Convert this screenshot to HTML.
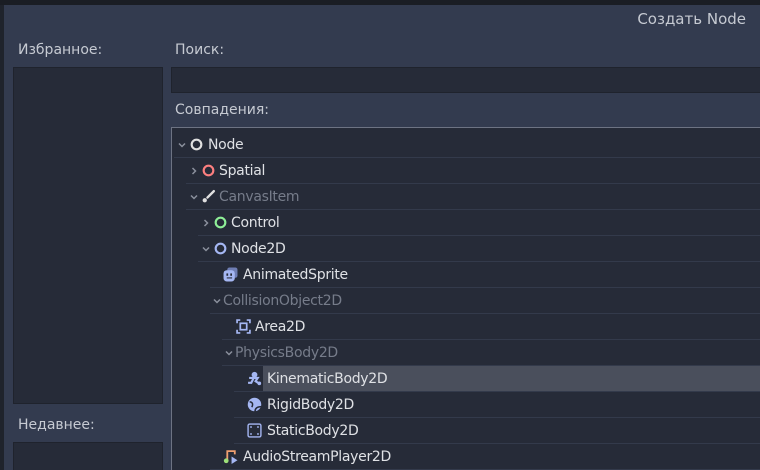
<!DOCTYPE html>
<html><head><meta charset="utf-8"><style>
*{margin:0;padding:0;box-sizing:border-box}
html,body{width:760px;height:470px;overflow:hidden}
body{background:#1f232c;font-family:"Liberation Sans","DejaVu Sans",sans-serif;position:relative}
.a{position:absolute}
.dlg{left:4px;top:5px;width:756px;height:465px;background:#333b4f}
.lbl{color:#c6cad2;font-size:14px;font-family:"DejaVu Sans",sans-serif}
.box{background:#262b38;border:1px solid #1f232d}
.tree{left:171px;top:127px;width:600px;height:343px;background:#262b38;border-left:1px solid #6d7383;border-top:1px solid #6d7383;overflow:hidden}
.row{position:absolute;height:26px;left:0;right:-20px;border-bottom:1px solid #333a4b}
.t{position:absolute;top:5px;font-size:14px;font-family:"DejaVu Sans",sans-serif;color:#dfe1e5;white-space:nowrap;letter-spacing:-0.3px}
.dim{color:#767c8a}
.ar{position:absolute;top:7px;width:12px;height:12px}
.ic{position:absolute;top:5px;width:15px;height:15px}
</style></head><body>
<div class="a" style="left:0;top:0;width:760px;height:5px;background:#1a1d24"></div>
<div class="a dlg"></div>
<div class="a lbl" style="right:14px;top:10px;font-size:15px">Создать Node</div>
<div class="a lbl" style="left:18px;top:42px">Избранное:</div>
<div class="a lbl" style="left:175px;top:42px">Поиск:</div>
<div class="a lbl" style="left:175px;top:102px">Совпадения:</div>
<div class="a lbl" style="left:18px;top:417px">Недавнее:</div>
<div class="a box" style="left:13px;top:67px;width:150px;height:337px"></div>
<div class="a box" style="left:13px;top:442px;width:150px;height:28px;border-bottom:none"></div>
<div class="a box" style="left:171px;top:67px;width:600px;height:26px"></div>
<div class="a tree">
<div class="row" style="top:4px;left:2px">
 <svg class="ar" style="left:2px" viewBox="0 0 12 12"><path d="M3 4.5l3 3 3-3" fill="none" stroke="#8a8f9c" stroke-width="1.5"/></svg>
 <svg class="ic" style="left:15px" viewBox="0 0 14 14"><circle cx="7" cy="7" r="4.5" fill="none" stroke="#e0e0e0" stroke-width="2"/></svg>
 <span class="t" style="left:34px">Node</span></div>
<div class="row" style="top:30px;left:14px">
 <svg class="ar" style="left:2px" viewBox="0 0 12 12"><path d="M4.5 3l3 3-3 3" fill="none" stroke="#8a8f9c" stroke-width="1.5"/></svg>
 <svg class="ic" style="left:15px" viewBox="0 0 14 14"><circle cx="7" cy="7" r="4.5" fill="none" stroke="#fc7f7f" stroke-width="2"/></svg>
 <span class="t" style="left:33px">Spatial</span></div>
<div class="row" style="top:56px;left:14px">
 <svg class="ar" style="left:2px" viewBox="0 0 12 12"><path d="M3 4.5l3 3 3-3" fill="none" stroke="#8a8f9c" stroke-width="1.5"/></svg>
 <svg class="ic" style="left:15px" viewBox="0 0 14 14"><path d="M12 2L6 8" stroke="#e0e0e0" stroke-width="2.2" stroke-linecap="round"/><circle cx="3.5" cy="10.5" r="2" fill="#e0e0e0"/></svg>
 <span class="t dim" style="left:33px">CanvasItem</span></div>
<div class="row" style="top:82px;left:26px">
 <svg class="ar" style="left:2px" viewBox="0 0 12 12"><path d="M4.5 3l3 3-3 3" fill="none" stroke="#8a8f9c" stroke-width="1.5"/></svg>
 <svg class="ic" style="left:15px" viewBox="0 0 14 14"><circle cx="7" cy="7" r="4.5" fill="none" stroke="#8eef97" stroke-width="2"/></svg>
 <span class="t" style="left:33px">Control</span></div>
<div class="row" style="top:108px;left:26px">
 <svg class="ar" style="left:2px" viewBox="0 0 12 12"><path d="M3 4.5l3 3 3-3" fill="none" stroke="#8a8f9c" stroke-width="1.5"/></svg>
 <svg class="ic" style="left:15px" viewBox="0 0 14 14"><circle cx="7" cy="7" r="4.5" fill="none" stroke="#a5b7f3" stroke-width="2"/></svg>
 <span class="t" style="left:33px">Node2D</span></div>
<div class="row" style="top:134px;left:38px">
 <svg class="ic" style="left:13px" viewBox="0 0 14 14"><rect x="4" y="0.5" width="9.5" height="9.5" rx="2" fill="#6f7eb4"/><rect x="0.5" y="3" width="10.5" height="10.5" rx="3" fill="#a5b7f3"/><rect x="3.2" y="6" width="1.6" height="2.2" fill="#262b38"/><rect x="6.8" y="6" width="1.6" height="2.2" fill="#262b38"/><path d="M3.5 10.2h5" stroke="#262b38" stroke-width="1"/></svg>
 <span class="t" style="left:33px">AnimatedSprite</span></div>
<div class="row" style="top:160px;left:38px">
 <svg class="ar" style="left:1px" viewBox="0 0 12 12"><path d="M3 4.5l3 3 3-3" fill="none" stroke="#8a8f9c" stroke-width="1.5"/></svg>
 <span class="t dim" style="left:13px">CollisionObject2D</span></div>
<div class="row" style="top:186px;left:50px">
 <svg class="ic" style="left:14px" viewBox="0 0 14 14"><path d="M1 4V1h3M10 1h3v3M13 10v3h-3M4 13H1v-3" fill="none" stroke="#a5b7f3" stroke-width="1.6"/><rect x="4" y="4" width="6" height="6" fill="none" stroke="#a5b7f3" stroke-width="1.6"/></svg>
 <span class="t" style="left:33px">Area2D</span></div>
<div class="row" style="top:212px;left:50px">
 <svg class="ar" style="left:1px" viewBox="0 0 12 12"><path d="M3 4.5l3 3 3-3" fill="none" stroke="#8a8f9c" stroke-width="1.5"/></svg>
 <span class="t dim" style="left:13px">PhysicsBody2D</span></div>
<div class="row" style="top:238px;left:62px">
 <div class="a" style="left:29px;top:0;right:0;height:25px;background:#4a4f5c"></div>
 <svg class="ic" style="left:13px" viewBox="0 0 14 14"><circle cx="7" cy="3.5" r="2.7" fill="#a5b7f3"/><path d="M2 6.5h8l-2 3 3 2M6 7l-2 4H1" fill="none" stroke="#a5b7f3" stroke-width="2"/><circle cx="11.5" cy="11.5" r="1.7" fill="#a5b7f3"/></svg>
 <span class="t" style="left:33px">KinematicBody2D</span></div>
<div class="row" style="top:264px;left:62px">
 <svg class="ic" style="left:13px" viewBox="0 0 14 14"><circle cx="7" cy="7" r="6.3" fill="#a5b7f3"/><path d="M2.5 4.5c2.5 0 3.5 2 2 5M7.5 13.5c0-3 2-4.5 6-4.5" fill="none" stroke="#262b38" stroke-width="1.4"/></svg>
 <span class="t" style="left:33px">RigidBody2D</span></div>
<div class="row" style="top:290px;left:62px">
 <svg class="ic" style="left:13px" viewBox="0 0 14 14"><rect x="1" y="1" width="12" height="12" rx="1.5" fill="none" stroke="#a5b7f3" stroke-width="1.3"/><rect x="3" y="3" width="1.5" height="1.5" fill="#a5b7f3"/><rect x="9.5" y="3" width="1.5" height="1.5" fill="#a5b7f3"/><rect x="3" y="9.5" width="1.5" height="1.5" fill="#a5b7f3"/><rect x="9.5" y="9.5" width="1.5" height="1.5" fill="#a5b7f3"/></svg>
 <span class="t" style="left:33px">StaticBody2D</span></div>
<div class="row" style="top:316px;left:38px">
 <svg class="ic" style="left:13px" viewBox="0 0 14 14"><path d="M4 11V2h7v3" fill="none" stroke="#f0a070" stroke-width="1.7"/><circle cx="3" cy="11" r="2.2" fill="#9ee07a"/><path d="M8 7l5.5 3.5L8 14z" fill="#a5b7f3"/></svg>
 <span class="t" style="left:33px">AudioStreamPlayer2D</span></div>
</div>
</body></html>
